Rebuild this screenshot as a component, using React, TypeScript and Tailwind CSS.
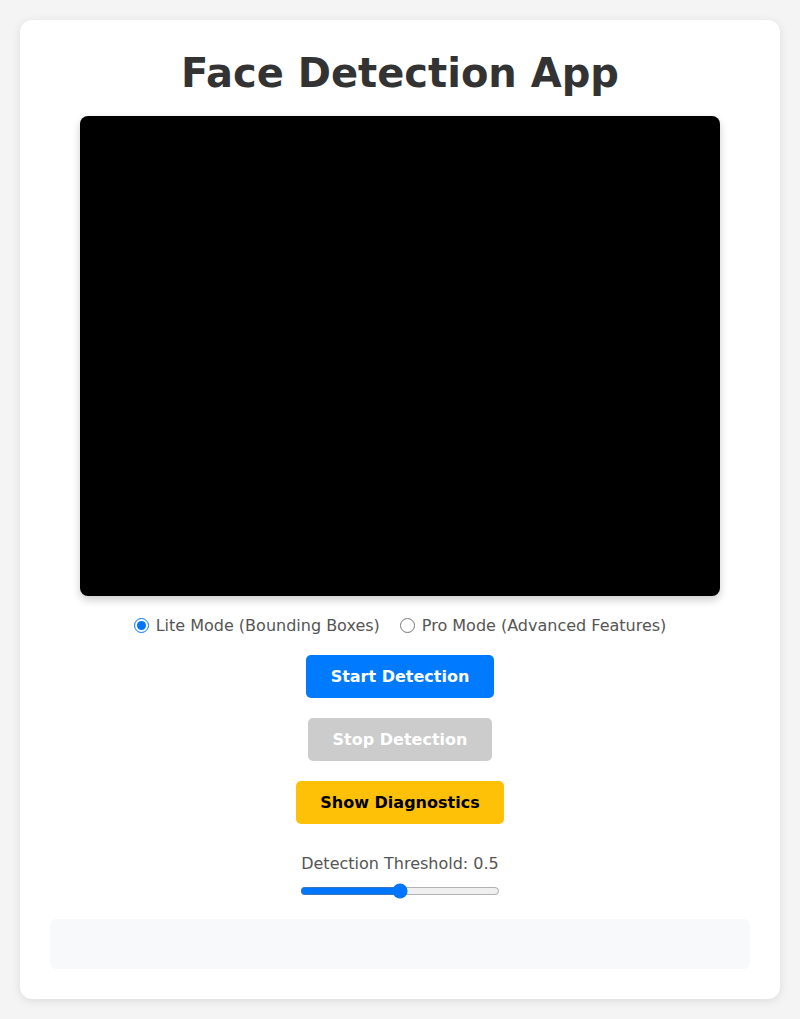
import React, { useState } from "react";

export default function App() {
  const [mode, setMode] = useState("lite");
  const [threshold, setThreshold] = useState(0.5);
  return (
    <div className="min-h-screen bg-[#f4f4f4] p-5 font-['DejaVu_Sans',sans-serif]">
      <div className="bg-white rounded-xl shadow-[0_2px_10px_rgba(0,0,0,0.1)] p-[30px] text-center">
        <h1 className="text-[40px] leading-[46px] font-bold text-[#333] mb-5">Face Detection App</h1>
        <div className="w-[640px] h-[480px] mx-auto bg-black rounded-lg shadow-[0_4px_8px_rgba(0,0,0,0.2)]" />
        <div className="mt-5 flex justify-center items-center gap-5 text-[16px] leading-[19px] text-[#555]">
          <label className="flex items-center gap-[7px]">
            <input type="radio" name="mode" checked={mode === "lite"} onChange={() => setMode("lite")} className="w-[15px] h-[15px]" />
            Lite Mode (Bounding Boxes)
          </label>
          <label className="flex items-center gap-[7px]">
            <input type="radio" name="mode" checked={mode === "pro"} onChange={() => setMode("pro")} className="w-[15px] h-[15px]" />
            Pro Mode (Advanced Features)
          </label>
        </div>
        <div className="flex flex-col items-center">
          <button className="mt-5 bg-[#007bff] text-white font-bold text-[16px] leading-[19px] px-[25px] py-3 rounded-[5px]">Start Detection</button>
          <button disabled className="mt-5 bg-[#cccccc] text-white font-bold text-[16px] leading-[19px] px-[25px] py-3 rounded-[5px]">Stop Detection</button>
          <button className="mt-5 bg-[#ffc107] text-black font-bold text-[16px] leading-[19px] px-6 py-3 rounded-[5px]">Show Diagnostics</button>
        </div>
        <div className="mt-[30px] text-[16px] leading-[19px] text-[#555]">Detection Threshold: {threshold}</div>
        <div className="mt-[10px] flex justify-center">
          <input type="range" min={0} max={1} step={0.1} value={threshold} onChange={(e) => setThreshold(parseFloat(e.target.value))} className="w-[200px] h-4" />
        </div>
        <div className="mt-5 h-[50px] bg-[#f8f9fa] rounded-md" />
      </div>
    </div>
  );
}
